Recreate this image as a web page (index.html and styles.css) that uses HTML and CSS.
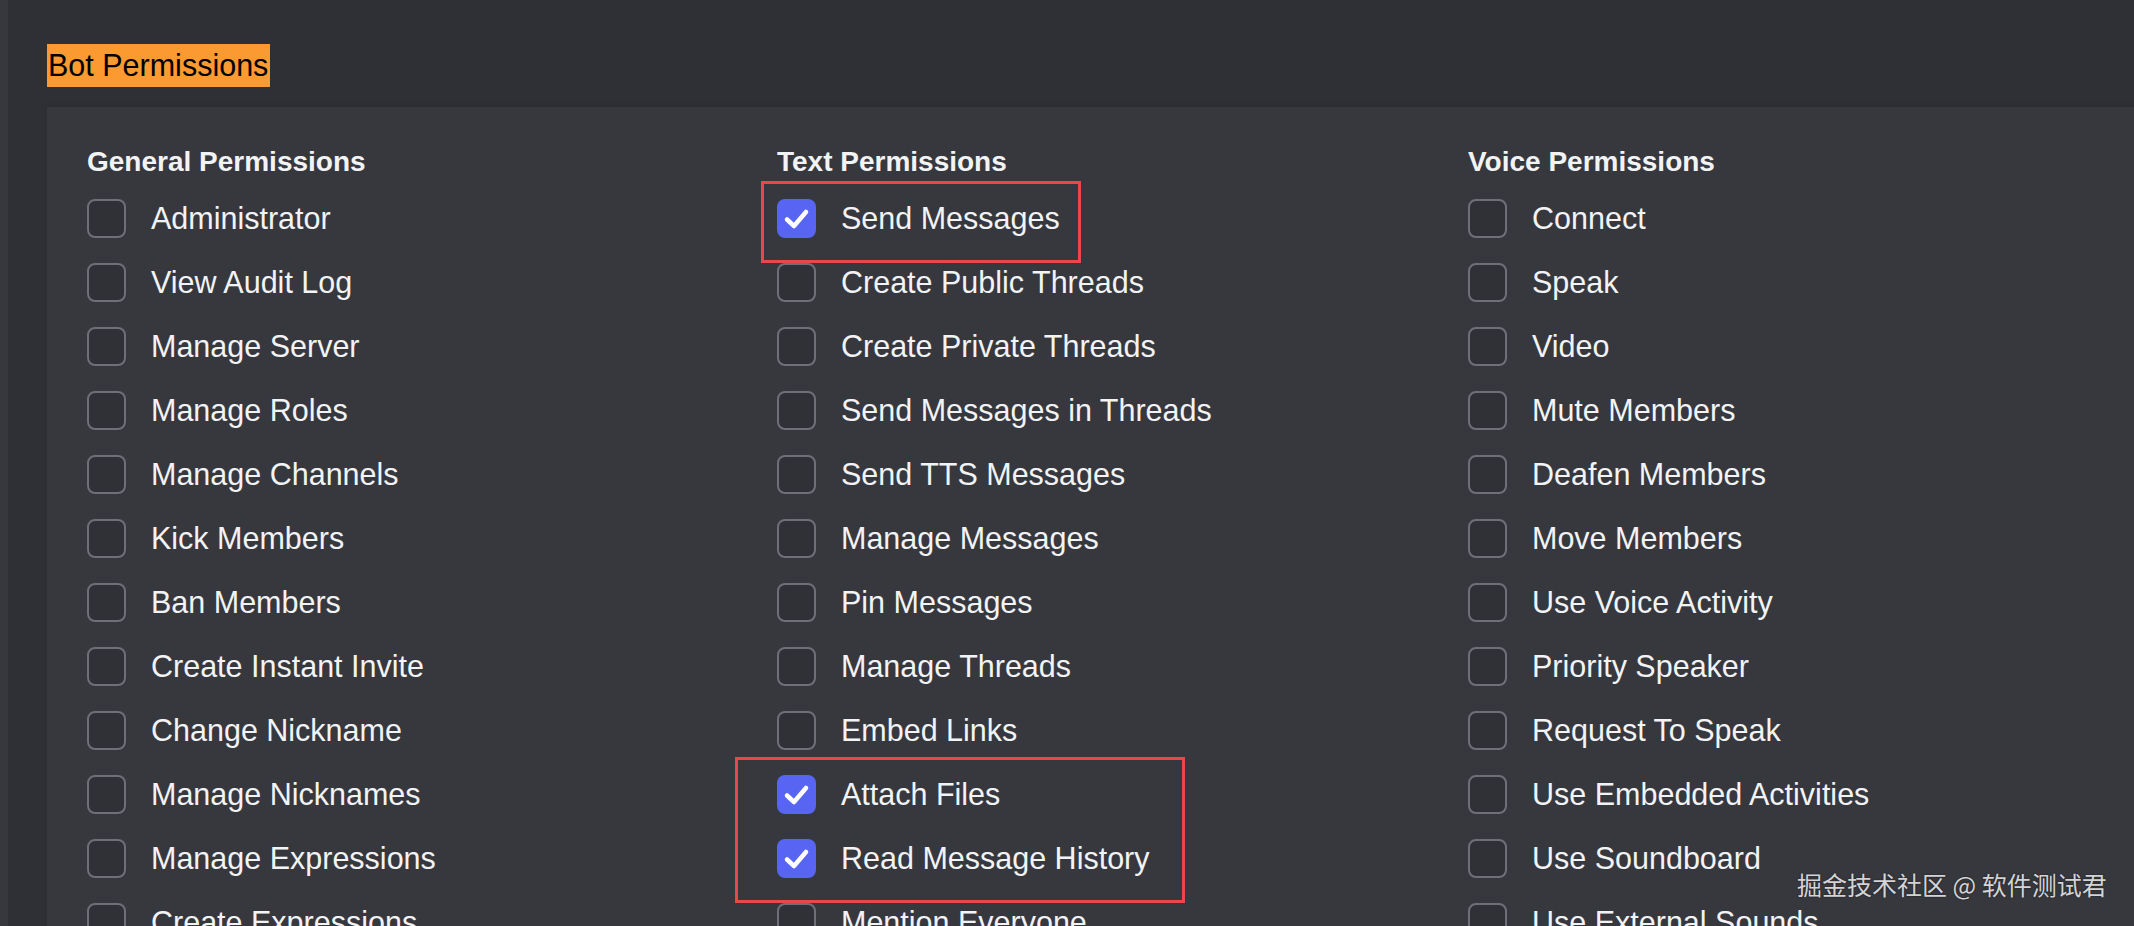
FILE: index.html
```html
<!DOCTYPE html>
<html lang="en">
<head>
<meta charset="utf-8">
<title>Bot Permissions</title>
<link rel="stylesheet" href="styles.css">
</head>
<body>
<div class="page">
  <div class="main">
    <div class="label-row"><span class="label">Bot Permissions</span></div>
    <section class="panel">
      <div class="columns">
        <div class="column">
          <h3 class="heading">General Permissions</h3>
          <ul class="list">
            <li class="item"><span class="box"></span><span class="name">Administrator</span></li>
            <li class="item"><span class="box"></span><span class="name">View Audit Log</span></li>
            <li class="item"><span class="box"></span><span class="name">Manage Server</span></li>
            <li class="item"><span class="box"></span><span class="name">Manage Roles</span></li>
            <li class="item"><span class="box"></span><span class="name">Manage Channels</span></li>
            <li class="item"><span class="box"></span><span class="name">Kick Members</span></li>
            <li class="item"><span class="box"></span><span class="name">Ban Members</span></li>
            <li class="item"><span class="box"></span><span class="name">Create Instant Invite</span></li>
            <li class="item"><span class="box"></span><span class="name">Change Nickname</span></li>
            <li class="item"><span class="box"></span><span class="name">Manage Nicknames</span></li>
            <li class="item"><span class="box"></span><span class="name">Manage Expressions</span></li>
            <li class="item"><span class="box"></span><span class="name">Create Expressions</span></li>
          </ul>
        </div>
        <div class="column">
          <h3 class="heading">Text Permissions</h3>
          <ul class="list">
            <li class="item"><span class="box checked"><svg viewBox="0 0 39 39"><path d="M10 20.5 L17 27 L29 13" /></svg></span><span class="name">Send Messages</span></li>
            <li class="item"><span class="box"></span><span class="name">Create Public Threads</span></li>
            <li class="item"><span class="box"></span><span class="name">Create Private Threads</span></li>
            <li class="item"><span class="box"></span><span class="name">Send Messages in Threads</span></li>
            <li class="item"><span class="box"></span><span class="name">Send TTS Messages</span></li>
            <li class="item"><span class="box"></span><span class="name">Manage Messages</span></li>
            <li class="item"><span class="box"></span><span class="name">Pin Messages</span></li>
            <li class="item"><span class="box"></span><span class="name">Manage Threads</span></li>
            <li class="item"><span class="box"></span><span class="name">Embed Links</span></li>
            <li class="item"><span class="box checked"><svg viewBox="0 0 39 39"><path d="M10 20.5 L17 27 L29 13" /></svg></span><span class="name">Attach Files</span></li>
            <li class="item"><span class="box checked"><svg viewBox="0 0 39 39"><path d="M10 20.5 L17 27 L29 13" /></svg></span><span class="name">Read Message History</span></li>
            <li class="item"><span class="box"></span><span class="name">Mention Everyone</span></li>
          </ul>
        </div>
        <div class="column">
          <h3 class="heading">Voice Permissions</h3>
          <ul class="list">
            <li class="item"><span class="box"></span><span class="name">Connect</span></li>
            <li class="item"><span class="box"></span><span class="name">Speak</span></li>
            <li class="item"><span class="box"></span><span class="name">Video</span></li>
            <li class="item"><span class="box"></span><span class="name">Mute Members</span></li>
            <li class="item"><span class="box"></span><span class="name">Deafen Members</span></li>
            <li class="item"><span class="box"></span><span class="name">Move Members</span></li>
            <li class="item"><span class="box"></span><span class="name">Use Voice Activity</span></li>
            <li class="item"><span class="box"></span><span class="name">Priority Speaker</span></li>
            <li class="item"><span class="box"></span><span class="name">Request To Speak</span></li>
            <li class="item"><span class="box"></span><span class="name">Use Embedded Activities</span></li>
            <li class="item"><span class="box"></span><span class="name">Use Soundboard</span></li>
            <li class="item"><span class="box"></span><span class="name">Use External Sounds</span></li>
          </ul>
        </div>
      </div>
      <div class="highlight hl-send"></div>
      <div class="highlight hl-files"></div>
    </section>
  </div>
</div>
<div class="watermark">掘金技术社区 @ 软件测试君</div>
</body>
</html>
```

FILE: styles.css
```css
html, body {
  margin: 0;
  padding: 0;
  height: 100%;
  overflow: hidden;
}

body {
  background: #2f3035;
  font-family: "Liberation Sans", Arial, sans-serif;
  color: #f2f3f5;
}

.page {
  border-left: 8px solid #37383e;
  min-height: 100%;
  box-sizing: border-box;
}

.main {
  padding-left: 39px;
}

.label-row {
  padding-top: 44px;
  display: flex;
}

.label {
  display: inline-block;
  background: #fb9a30;
  color: #000;
  font-size: 30.5px;
  line-height: 43px;
  height: 43px;
  padding: 0 2px 0 1px;
}

.panel {
  position: relative;
  margin-top: 20px;
  background: #37383e;
  padding: 35px 0 0 40px;
  box-shadow: 0 -2px 4px rgba(0, 0, 0, 0.08);
  min-height: 900px;
}

.columns {
  display: grid;
  grid-template-columns: 690px 691px 690px;
}

.heading {
  margin: 0 0 4px 0;
  font-size: 28px;
  font-weight: 700;
  line-height: 40px;
  height: 40px;
  color: #f2f3f5;
}

.list {
  list-style: none;
  margin: 0;
  padding: 0;
}

.item {
  display: flex;
  align-items: center;
  height: 64px;
  gap: 25px;
}

.box {
  flex: none;
  width: 39px;
  height: 39px;
  box-sizing: border-box;
  border: 2px solid #6f7077;
  border-radius: 8px;
  background: #303137;
  display: flex;
  align-items: center;
  justify-content: center;
}

.box.checked {
  border: none;
  background: #5865f2;
}

.box svg {
  width: 39px;
  height: 39px;
  display: block;
}

.box svg path {
  fill: none;
  stroke: #fff;
  stroke-width: 4.5;
  stroke-linecap: round;
  stroke-linejoin: round;
}

.name {
  font-size: 30.5px;
  line-height: 40px;
  color: #f2f3f5;
  white-space: nowrap;
}

.highlight {
  position: absolute;
  border: 3px solid #e8474d;
  box-sizing: border-box;
}

.hl-send {
  left: 714px;
  top: 74px;
  width: 320px;
  height: 82px;
}

.hl-files {
  left: 688px;
  top: 650px;
  width: 450px;
  height: 146px;
}

.watermark {
  position: absolute;
  left: 1797px;
  top: 866px;
  font-family: "Noto Sans CJK SC", sans-serif;
  font-size: 25px;
  line-height: 36px;
  color: #d4d4d6;
  text-shadow: 0 0 2px rgba(0, 0, 0, 0.6);
  white-space: nowrap;
}
```
